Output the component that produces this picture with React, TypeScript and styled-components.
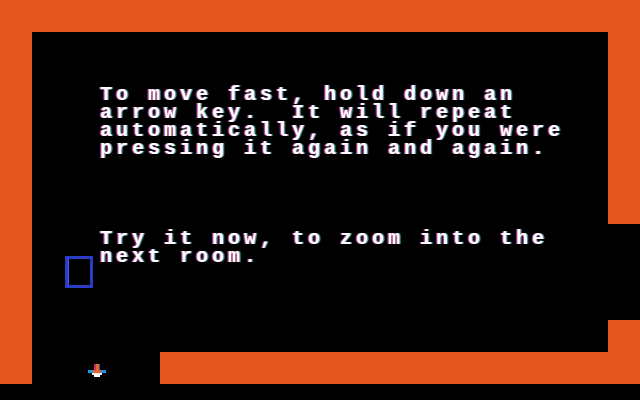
import React from "react";
import styled, { createGlobalStyle } from "styled-components";

const ORANGE = "#e3561f";

const Global = createGlobalStyle`
  html, body { margin: 0; padding: 0; background: #000; }
  body { width: 640px; height: 400px; overflow: hidden; }
`;

const Screen = styled.div`
  width: 640px;
  height: 400px;
  background: #000;
  display: grid;
  grid-template-columns: 32px 128px 448px 32px;
  grid-template-rows: 32px 192px 96px 32px 32px 16px;
`;

const Wall = styled.div<{ $area: string }>`
  grid-area: ${(p) => p.$area};
  background: ${ORANGE};
  z-index: 1;
`;

const Room = styled.div`
  grid-area: 2 / 2 / 6 / 4;
  position: relative;
  padding: 54px 0 0 68px;
  display: flex;
  flex-direction: column;
  gap: 72px;
`;

const Para = styled.div`
  display: flex;
  flex-direction: column;
`;

const Line = styled.div`
  font-family: "Liberation Mono", "DejaVu Sans Mono", monospace;
  font-weight: bold;
  font-size: 20px;
  line-height: 18px;
  height: 18px;
  letter-spacing: 4px;
  white-space: pre;
  color: #fff;
  text-shadow: -1.5px 0 rgba(235, 50, 90, 0.8), 1.5px 0 rgba(30, 170, 235, 0.8);
`;

const Cursor = styled.div`
  position: absolute;
  left: 33px;
  top: 224px;
  width: 28px;
  height: 32px;
  box-sizing: border-box;
  border: 3px solid #2b3cc6;
  box-shadow: inset 1px 0 0 #4a5cf0;
  background: #000;
`;

const Arrow = styled.svg`
  position: absolute;
  left: 56px;
  top: 332px;
  width: 18px;
  height: 14px;
`;

const paragraphs = [
  [
    "To move fast, hold down an",
    "arrow key.  It will repeat",
    "automatically, as if you were",
    "pressing it again and again.",
  ],
  ["Try it now, to zoom into the", "next room."],
];

export default function App() {
  return (
    <>
      <Global />
      <Screen>
        <Room>
          {paragraphs.map((lines, i) => (
            <Para key={i}>
              {lines.map((l, j) => (
                <Line key={j}>{l}</Line>
              ))}
            </Para>
          ))}
          <Cursor />
          <Arrow viewBox="0 0 18 14">
            <rect x="6" y="0" width="2" height="8" fill="#c02a70" />
            <rect x="8" y="0" width="3" height="8" fill="#e36a1f" />
            <rect x="11" y="0" width="1" height="8" fill="#3050d0" />
            <rect x="0" y="6" width="5" height="3" fill="#1aa0e0" />
            <rect x="5" y="6" width="8" height="3" fill="#e8602a" />
            <rect x="13" y="6" width="5" height="3" fill="#2090e0" />
            <rect x="4" y="9" width="10" height="2" fill="#f0f0f0" />
            <rect x="6" y="11" width="6" height="2" fill="#ffffff" />
          </Arrow>
        </Room>
        <Wall $area="1 / 1 / 2 / 5" />
        <Wall $area="2 / 1 / 6 / 2" />
        <Wall $area="2 / 4 / 3 / 5" />
        <Wall $area="4 / 4 / 6 / 5" />
        <Wall $area="5 / 3 / 6 / 5" />
      </Screen>
    </>
  );
}
